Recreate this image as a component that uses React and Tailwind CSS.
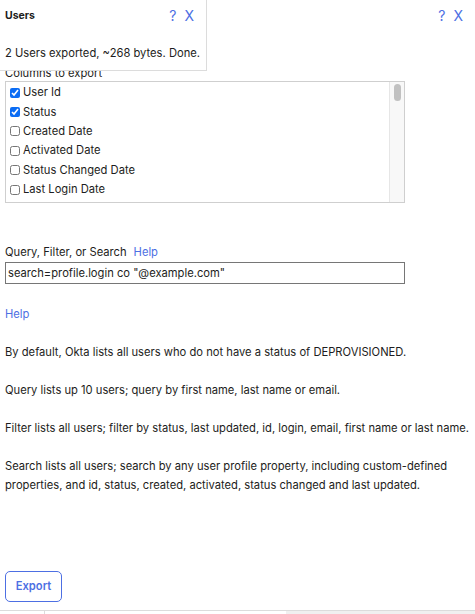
import React from 'react';

const columns = [
    { label: 'User Id', checked: true },
    { label: 'Status', checked: true },
    { label: 'Created Date', checked: false },
    { label: 'Activated Date', checked: false },
    { label: 'Status Changed Date', checked: false },
    { label: 'Last Login Date', checked: false },
    { label: 'Last Updated Date', checked: false },
];

const notes = [
    'By default, Okta lists all users who do not have a status of DEPROVISIONED.',
    'Query lists up 10 users; query by first name, last name or email.',
    'Filter lists all users; filter by status, last updated, id, login, email, first name or last name.',
    'Search lists all users; search by any user profile property, including custom-defined properties, and id, status, created, activated, status changed and last updated.',
];

const App = () => {
    return (
        <div className="relative w-[475px] h-[614px] overflow-hidden bg-white text-[#1d1d21] text-[11.2px] leading-[19px] font-['Inter','Liberation_Sans',sans-serif]">
            {/* Export popup */}
            <div className="absolute left-0 top-0 z-10 w-[207px] h-[71px] bg-white border-r border-b border-[#dcdcdc]">
                <div className="flex items-center justify-between pl-[5px] pr-[12px] pt-[6px]">
                    <span className="font-bold text-[10.5px]">Users</span>
                    <span className="flex gap-[8px] text-[14px] text-[#4d6fe3]">
                        <span>?</span>
                        <span>X</span>
                    </span>
                </div>
                <p className="pl-[5px] mt-[19px]">2 Users exported, ~268 bytes. Done.</p>
            </div>

            <div className="pl-[5px]">
                <div className="flex justify-end pr-[12px] pt-[6px] gap-[8px] text-[14px] text-[#4d6fe3]">
                    <span>?</span>
                    <span>X</span>
                </div>

                <div className="mt-[41px] leading-[14px]">Columns to export</div>

                {/* Column list */}
                <div className="mt-[1px] flex w-[400px] h-[122px] border border-[#cfcfcf] overflow-hidden">
                    <div className="flex-1 pt-[1px] pl-[4px]">
                        {columns.map((col) => (
                            <label key={col.label} className="flex items-center gap-[3px] h-[19.4px] shrink-0">
                                <input
                                    type="checkbox"
                                    defaultChecked={col.checked}
                                    className="m-0 w-[10px] h-[10px] accent-[#0b6cf4]"
                                />
                                <span>{col.label}</span>
                            </label>
                        ))}
                    </div>
                    <div className="w-[15px] bg-[#f8f8f8] border-l border-[#e6e6e6] pt-[2px] flex justify-center">
                        <div className="w-[7px] h-[17px] rounded-full bg-[#c1c1c1]" />
                    </div>
                </div>

                <div className="mt-[40px] flex gap-[7px]">
                    <span>Query, Filter, or Search</span>
                    <span className="text-[#4d6fe3]">Help</span>
                </div>
                <input
                    type="text"
                    defaultValue='search=profile.login co "@example.com"'
                    className="block w-[400px] h-[22px] border border-[#767676] px-[2px] text-[11.2px] outline-none"
                />

                <div className="mt-[21px] text-[#4d6fe3]">Help</div>

                <div className="mt-[19px] pr-[4px] flex flex-col gap-[19px]">
                    {notes.map((n, i) => (
                        <p key={i}>{n}</p>
                    ))}
                </div>

                <button className="mt-[76px] w-[57px] h-[31px] border border-[#4d6fe3] rounded-[5px] text-[#4d6fe3] font-semibold text-[11.2px]">
                    Export
                </button>
            </div>

            {/* bottom bar */}
            <div className="absolute left-0 right-0 top-[610px] h-[4px] flex border-t border-[#dcdcdc]">
                <div className="w-[45px] border-r border-[#dcdcdc]" />
                <div className="w-[241px]" />
                <div className="flex-1 bg-[#f0f0f0]" />
            </div>
        </div>
    );
};

export default App;
